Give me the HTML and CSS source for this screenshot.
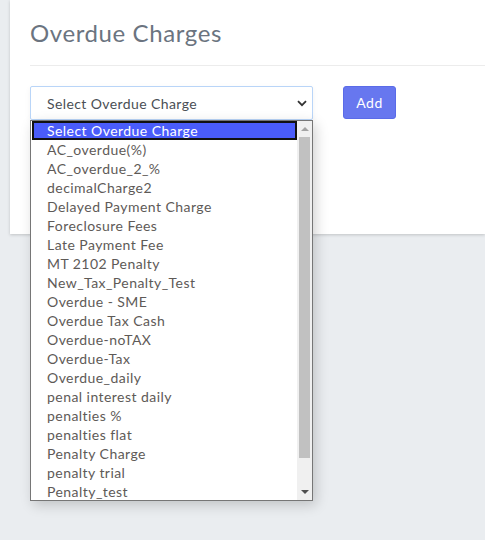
FILE: index.html
```html
<!DOCTYPE html>
<html>
<head>
<meta charset="utf-8">
<link rel="stylesheet" href="styles.css">
</head>
<body>
<div class="page">
  <div class="card">
    <h2 class="title">Overdue Charges</h2>
    <div class="divider"></div>
    <div class="form-row">
      <div class="select-wrap">
        <div class="select">
          <span>Select Overdue Charge</span>
          <svg class="chev" width="10" height="7" viewBox="0 0 10 7"><path d="M1 1.2 L5 5.2 L9 1.2" fill="none" stroke="#333" stroke-width="1.8"/></svg>
        </div>
        <div class="dropdown">
          <div class="options">
            <div class="opt selected">Select Overdue Charge</div>
            <div class="opt">AC_overdue(%)</div>
            <div class="opt">AC_overdue_2_%</div>
            <div class="opt">decimalCharge2</div>
            <div class="opt">Delayed Payment Charge</div>
            <div class="opt">Foreclosure Fees</div>
            <div class="opt">Late Payment Fee</div>
            <div class="opt">MT 2102 Penalty</div>
            <div class="opt">New_Tax_Penalty_Test</div>
            <div class="opt">Overdue - SME</div>
            <div class="opt">Overdue Tax Cash</div>
            <div class="opt">Overdue-noTAX</div>
            <div class="opt">Overdue-Tax</div>
            <div class="opt">Overdue_daily</div>
            <div class="opt">penal interest daily</div>
            <div class="opt">penalties %</div>
            <div class="opt">penalties flat</div>
            <div class="opt">Penalty Charge</div>
            <div class="opt">penalty trial</div>
            <div class="opt">Penalty_test</div>
          </div>
          <div class="scrollbar">
            <div class="arrow up"></div>
            <div class="thumb"></div>
            <div class="arrow down"></div>
          </div>
        </div>
      </div>
      <button class="btn">Add</button>
    </div>
  </div>
</div>
</body>
</html>
```

FILE: styles.css
```css
html, body {
  margin: 0;
  padding: 0;
}
body {
  background: #eaedf0;
  font-family: Lato, "Noto Sans", sans-serif;
  width: 485px;
  height: 540px;
  overflow: hidden;
}
.page {
  padding-left: 10px;
}
.card {
  background: #fff;
  height: 234px;
  box-shadow: 0 1px 3px rgba(0,0,0,0.18);
  padding-left: 20px;
  box-sizing: border-box;
}
.title {
  margin: 0;
  padding-top: 18px;
  font-weight: 400;
  font-size: 24px;
  line-height: 30px;
  color: #6b7480;
  letter-spacing: 0.6px;
}
.divider {
  margin-top: 17px;
  height: 1px;
  background: #ececec;
}
.form-row {
  display: flex;
  align-items: flex-start;
  gap: 30px;
  margin-top: 20px;
}
.select-wrap {
  position: relative;
  width: 283px;
}
.select {
  height: 34px;
  box-sizing: border-box;
  border: 1px solid #b9d5f8;
  border-radius: 2px;
  display: flex;
  align-items: center;
  justify-content: space-between;
  padding: 0 5px 0 16px;
  font-size: 14px;
  letter-spacing: 0.4px;
  color: #4a4f55;
  box-shadow: 0 2px 6px rgba(0,0,0,0.05);
}
.chev {
  display: block;
}
.btn {
  width: 53px;
  height: 33px;
  background: #6777ef;
  border: 1px solid #5a6be8;
  border-radius: 3px;
  color: #fff;
  font-family: Lato, "Noto Sans", sans-serif;
  font-size: 14px;
  letter-spacing: 0.5px;
  padding: 0;
}
.dropdown {
  position: absolute;
  top: 34px;
  left: 0;
  width: 283px;
  height: 381px;
  box-sizing: border-box;
  border: 1px solid #767676;
  background: #fff;
  display: flex;
  box-shadow: 3px 4px 12px rgba(0,0,0,0.18);
}
.options {
  flex: 1;
}
.opt {
  height: 19px;
  line-height: 19px;
  font-size: 14px;
  letter-spacing: 0.45px;
  color: #5e5a57;
  padding-left: 16px;
  white-space: nowrap;
}
.opt.selected {
  background: #4a5cfa;
  color: #fff;
  outline: 2px solid #111;
  outline-offset: -2px;
  margin: 0 0 0 1px;
  padding-left: 15px;
}
.scrollbar {
  width: 15px;
  background: #f0f0f0;
  display: flex;
  flex-direction: column;
  align-items: center;
}
.arrow {
  width: 0;
  height: 0;
  border-left: 4px solid transparent;
  border-right: 4px solid transparent;
}
.arrow.up {
  margin-top: 6px;
  border-bottom: 4px solid #a3a3a3;
}
.arrow.down {
  margin-top: auto;
  margin-bottom: 6px;
  border-top: 4px solid #505050;
}
.thumb {
  width: 11px;
  height: 321px;
  margin-top: 6px;
  background: #c1c1c1;
}
```
